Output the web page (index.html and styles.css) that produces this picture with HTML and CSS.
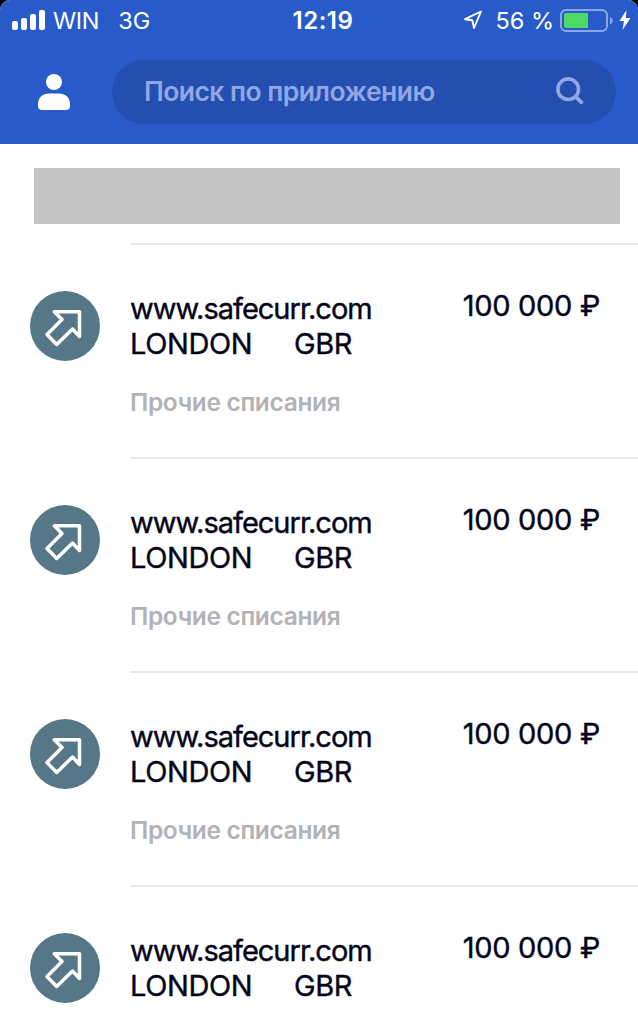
FILE: index.html
```html
<!DOCTYPE html>
<html lang="ru">
<head>
<meta charset="UTF-8">
<title>История операций</title>
<meta name="viewport" content="width=device-width,initial-scale=1.0">
<link rel="stylesheet" href="styles.css">
</head>
<body>

<!-- arrow icon shared by all rows -->
<svg class="sprite" width="0" height="0">
  <symbol id="arrow" viewBox="0 0 70 70">
    <circle cx="35" cy="35" r="35" fill="#557788"/>
    <path d="M24.300 20.800H49.500V45.500L42.500 38L26.700 53.500L17 43.500L32 28.500Z" fill="none" stroke="#fff" stroke-width="3.500" stroke-linejoin="round"/>
  </symbol>
</svg>

<header class="header">
  <div class="status">
    <div class="left">
      <svg width="34" height="20" viewBox="0 0 34 20" fill="#fff">
        <rect x="0" y="11" width="6" height="9" rx="2"/>
        <rect x="9" y="8" width="6" height="12" rx="2"/>
        <rect x="18" y="4" width="6" height="16" rx="2"/>
        <rect x="27" y="0" width="6" height="20" rx="2"/>
      </svg>
      <span class="carrier">WIN</span>
      <span class="network">3G</span>
    </div>
    <div class="time">12:19</div>
    <div class="right">
      <svg class="location" width="20" height="20" viewBox="0 0 20 20">
        <path d="M18 1.500L2 9.200L9.300 10.200L11 18Z" fill="none" stroke="#fff" stroke-width="1.900" stroke-linejoin="round"/>
      </svg>
      <span class="percent">56 %</span>
      <svg class="battery" width="54" height="24" viewBox="0 0 54 24">
        <rect x="1" y="2" width="46" height="21" rx="5" fill="none" stroke="#8da6e8" stroke-width="2"/>
        <path d="M4 7Q4 5 6 5H28V20H6Q4 20 4 18Z" fill="#4cd964"/>
        <path d="M50 9Q52.800 10 52.800 12.700Q52.800 15.400 50 16.500Z" fill="#8da6e8"/>
      </svg>
      <svg class="bolt" width="12" height="20" viewBox="0 0 12 20">
        <path d="M7.500 0L0.500 11H5L3.500 20L11.500 8H6.800Z" fill="#fff"/>
      </svg>
    </div>
  </div>
  <div class="bar">
    <svg class="user" width="32" height="36" viewBox="0 0 32 36" fill="#fff">
      <circle cx="16" cy="8" r="8"/>
      <path d="M0 32V30C0 23.500 5 19.500 11 19.500H21C27 19.500 32 23.500 32 30V32Q32 36 28 36H4Q0 36 0 32Z"/>
    </svg>
    <div class="search">
      <span class="hint">Поиск по приложению</span>
      <svg class="glass" width="28" height="28" viewBox="0 0 28 28" fill="none" stroke="#91a7e3">
        <circle cx="12.200" cy="12.200" r="10.300" stroke-width="3.600"/>
        <path d="M20 20L25.200 25.200" stroke-width="4" stroke-linecap="round"/>
      </svg>
    </div>
  </div>
</header>

<div class="blank"></div>

<ul class="list">
  <li class="row">
    <svg class="icon"><use href="#arrow"/></svg>
    <div class="info">
      <div class="text">
        <div class="name">www.safecurr.com</div>
        <div class="place"><span class="city">LONDON</span><span>GBR</span></div>
        <div class="category">Прочие списания</div>
      </div>
      <div class="amount">100 000 ₽</div>
    </div>
  </li>
  <li class="row">
    <svg class="icon"><use href="#arrow"/></svg>
    <div class="info">
      <div class="text">
        <div class="name">www.safecurr.com</div>
        <div class="place"><span class="city">LONDON</span><span>GBR</span></div>
        <div class="category">Прочие списания</div>
      </div>
      <div class="amount">100 000 ₽</div>
    </div>
  </li>
  <li class="row">
    <svg class="icon"><use href="#arrow"/></svg>
    <div class="info">
      <div class="text">
        <div class="name">www.safecurr.com</div>
        <div class="place"><span class="city">LONDON</span><span>GBR</span></div>
        <div class="category">Прочие списания</div>
      </div>
      <div class="amount">100 000 ₽</div>
    </div>
  </li>
  <li class="row last">
    <svg class="icon"><use href="#arrow"/></svg>
    <div class="info">
      <div class="text">
        <div class="name">www.safecurr.com</div>
        <div class="place"><span class="city">LONDON</span><span>GBR</span></div>
      </div>
      <div class="amount">100 000 ₽</div>
    </div>
  </li>
</ul>

</body>
</html>
```
FILE: styles.css
```css
* { box-sizing: border-box; }
html { background: #000; }
body {
  margin: 0;
  height: 1034px;
  overflow: hidden;
  background: #fff;
  border-radius: 10px 10px 0 0;
  font-family: Inter, "Liberation Sans", sans-serif;
  color: #05051a;
}
svg { display: block; flex: none; }
.sprite { position: absolute; }

.header {
  height: 144px;
  background: #285bc9;
  color: #fff;
}
.status {
  display: grid;
  grid-template-columns: 1fr auto 1fr;
  align-items: center;
  height: 40px;
  padding: 0 7px 0 12px;
  font-size: 23.5px;
  line-height: 38px;
  white-space: nowrap;
}
.status span, .time { padding-top: 2px; }
.left, .right {
  display: flex;
  align-items: center;
}
.right { justify-content: flex-end; }
.carrier { margin-left: 7px; letter-spacing: -0.3px; }
.network { margin-left: 19px; }
.time {
  font-size: 24px;
  font-weight: 600;
  letter-spacing: 0.5px;
  margin-left: 3px;
}
.percent { margin: 0 6px 0 12px; }
.bolt { margin-left: 5px; }

.bar {
  display: flex;
  align-items: center;
  gap: 42px;
  padding: 20px 22px 0 38px;
}
.search {
  flex: 1;
  display: flex;
  align-items: center;
  justify-content: space-between;
  height: 64px;
  padding: 0 32px;
  border-radius: 32px;
  background: #244eb0;
}
.hint {
  padding-bottom: 2px;
  font-size: 26.5px;
  font-weight: 600;
  letter-spacing: -0.55px;
  color: #91a7e3;
}
.glass { margin-bottom: 2px; }

.blank {
  height: 56px;
  margin: 24px 18px 19px 34px;
  background: #c4c4c4;
}

.list {
  list-style: none;
  margin: 0;
  padding: 0;
}
.row {
  display: flex;
  height: 214px;
  padding-left: 30px;
}
.last { height: 149px; }
.icon {
  width: 70px;
  height: 70px;
  margin: 48px 30px 0 0;
}
.info {
  flex: 1;
  display: flex;
  justify-content: space-between;
  padding: 43px 38px 0 0;
  border-top: 2px solid #e9e9eb;
  font-size: 29px;
  line-height: 35px;
  white-space: nowrap;
}
.text { padding-top: 3px; }
.name, .place, .amount { -webkit-text-stroke: 0.4px #05051a; }
.name { letter-spacing: -1px; }
.place {
  display: flex;
  letter-spacing: -0.4px;
}
.city { width: 164px; }
.amount { letter-spacing: -0.3px; }
.category {
  margin-top: 24px;
  font-size: 24.5px;
  font-weight: 600;
  letter-spacing: -0.35px;
  color: #b2b2b7;
}
```
